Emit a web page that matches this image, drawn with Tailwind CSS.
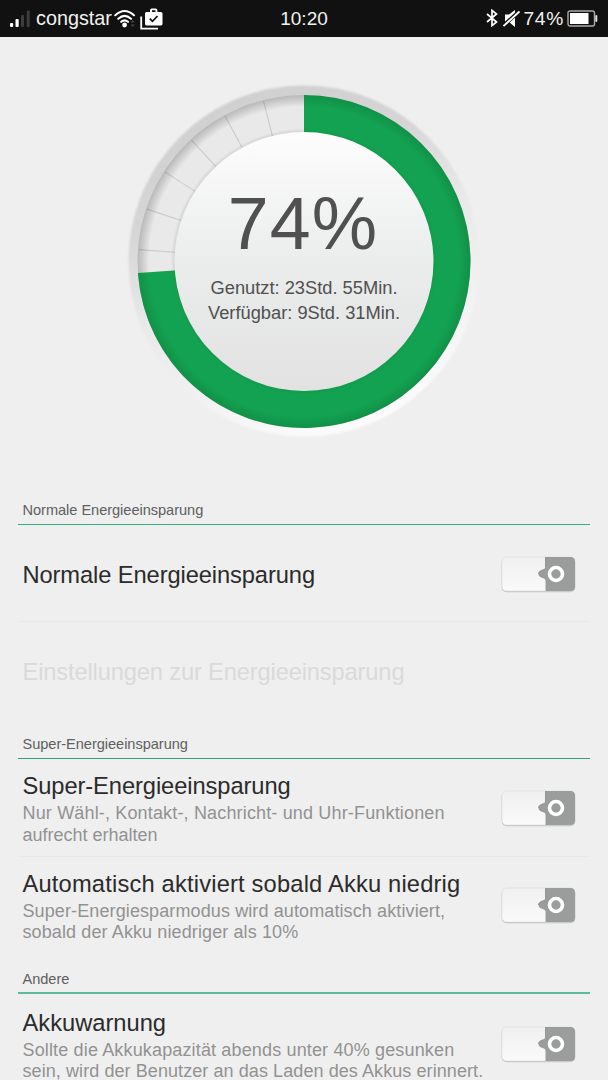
<!DOCTYPE html>
<html lang="de">

<head>
    <meta charset="UTF-8">
    <meta name="viewport" content="width=device-width, initial-scale=1.0">
    <title>Energieeinsparung</title>
    <script src="https://cdn.jsdelivr.net/npm/@tailwindcss/browser@4"></script>
</head>

<body class="h-[1080px] overflow-hidden bg-[#efefef] font-['Liberation_Sans',sans-serif] text-[#2b2b2b]">
    <!-- Status bar -->
    <header class="grid h-[37px] grid-cols-[1fr_auto_1fr] items-center bg-[#111] text-[#f2f2f2]">
        <div class="flex items-center pl-[10px]">
            <svg class="h-[18px] w-5" viewBox="0 0 20 18">
                <rect x="0" y="13" width="3.2" height="4" rx="1" fill="#fff" />
                <rect x="5.5" y="9" width="3.2" height="8" rx="1" fill="#fff" />
                <rect x="11" y="5" width="3" height="12" rx="1" fill="#3d3d3d" />
                <rect x="16.7" y="0.5" width="3" height="16.5" rx="1" fill="#3d3d3d" />
            </svg>
            <span class="ml-[6px] text-[19.8px] leading-none">congstar</span>
            <svg class="ml-[2px] h-[20px] w-[22px]" viewBox="0 0 22 20" fill="none" stroke="#fff" stroke-width="2.1" stroke-linecap="round">
                <path d="M1.3 6.2Q10.5-2.2 20 6.2M4.3 9.7Q10.5 4 17 9.7M7.2 12.8Q10.5 10 14 12.8" />
                <circle cx="10.6" cy="16" r="2.4" fill="#fff" stroke="none" />
                <path d="M16.5 13.5l2.2-2.6 2.2 2.6zM16.5 15.5l2.2 2.6 2.2-2.6z" fill="#444" stroke="none" />
            </svg>
            <svg class="ml-[4px] h-[22px] w-[24px]" viewBox="0 0 24 22">
                <path d="M1.2 8.5V20.6H18" fill="none" stroke="#fff" stroke-width="1.8" />
                <path d="M6.5 4H10V2.2Q10 .4 11.8 .4H15.6Q17.4 .4 17.4 2.2V4H21Q22.5 4 22.5 5.5V16Q22.5 17.4 21 17.4H6.5Q5 17.4 5 16V5.5Q5 4 6.5 4ZM12 4H15.5V2.2H12Z" fill="#fff" fill-rule="evenodd" />
                <path d="M9.8 10.6L12.5 13.3L17.5 8" fill="none" stroke="#111" stroke-width="1.8" />
            </svg>
        </div>
        <span class="text-[19px] leading-none">10:20</span>
        <div class="flex items-center justify-end pr-[10px]">
            <svg class="h-[18px] w-[12px]" viewBox="0 0 12 18" fill="none" stroke="#fff" stroke-width="1.7">
                <path d="M1 5L10.5 13L6 16.6V1.4L10.5 5L1 13" />
            </svg>
            <svg class="ml-[5px] h-[19px] w-[18px]" viewBox="0 0 18 19">
                <path d="M2 5.5H6L12 1V18L6 13H2Z" fill="#fff" />
                <path d="M0 17L16.5 2" stroke="#111" stroke-width="3.8" />
                <path d="M0.5 17L16.5 2.5" stroke="#fff" stroke-width="1.9" />
            </svg>
            <span class="ml-[2px] text-[19.2px] leading-none tracking-[0.7px]">74%</span>
            <svg class="ml-[3px] h-[17px] w-[31px]" viewBox="0 0 31 17">
                <rect x="1" y="1" width="26.5" height="15" rx="2" fill="none" stroke="#aaa" stroke-width="1.4" />
                <rect x="3" y="3" width="18.5" height="11" fill="#fff" />
                <rect x="28.3" y="5" width="2" height="7" rx="1" fill="#ddd" />
            </svg>
        </div>
    </header>

    <!-- Charge dial -->
    <section class="grid h-[449px] justify-center pt-[44px]">
        <svg class="col-start-1 row-start-1 size-[360px]" viewBox="124 81 360 360">
            <defs>
                <linearGradient id="rim" x1=".3" y1="0" x2=".7" y2="1">
                    <stop offset="0" stop-color="#cfcfcf" />
                    <stop offset=".25" stop-color="#d5d5d5" />
                    <stop offset=".5" stop-color="#e9e9e9" />
                    <stop offset=".75" stop-color="#f2f2f2" />
                    <stop offset="1" stop-color="#fdfdfd" />
                </linearGradient>
                <linearGradient id="face" x1="0" y1="0" x2="0" y2="1">
                    <stop offset="0" stop-color="#fdfdfd" />
                    <stop offset=".5" stop-color="#ebecec" />
                    <stop offset="1" stop-color="#e2e2e2" />
                </linearGradient>
                <radialGradient id="shade" gradientUnits="userSpaceOnUse" cx="304" cy="261.5" r="166.5">
                    <stop offset=".77" stop-color="#000" stop-opacity=".06" />
                    <stop offset=".8" stop-color="#000" stop-opacity="0" />
                    <stop offset=".93" stop-color="#000" stop-opacity="0" />
                    <stop offset="1" stop-color="#000" stop-opacity=".11" />
                </radialGradient>
                <filter id="soft" x="-5%" y="-5%" width="110%" height="110%">
                    <feGaussianBlur stdDeviation=".8" />
                </filter>
            </defs>
            <circle cx="304" cy="261" r="175.5" fill="url(#rim)" filter="url(#soft)" />
            <circle cx="304" cy="261.5" r="166.5" fill="#e9e9e9" />
            <g id="ticks" stroke="#cbcbcb" stroke-width="1.1"></g>
            <circle cx="304" cy="261.5" r="166.5" fill="url(#shade)" />
            <path d="M304 261.5V95A166.5 166.5 0 1 1 137.9 273Z" fill="#13a251" />
            <circle cx="304" cy="261.5" r="166.5" fill="url(#shade)" />
            <circle cx="304" cy="261.5" r="129.5" fill="url(#face)" />
        </svg>
        <div class="col-start-1 row-start-1 flex flex-col items-center pt-[101px] text-[#505050]">
            <div class="h-[94px] pr-[2px] text-[73.5px] leading-[84px] tracking-[1.2px]">74%</div>
            <div class="text-center text-[18.3px] leading-[24.5px]">Genutzt: 23Std. 55Min.<br>Verfügbar: 9Std. 31Min.</div>
        </div>
    </section>

    <main class="px-[18px]">
        <h2 class="flex h-[39px] items-end border-b border-[#35ab7e] pb-[5px] pl-[4.5px] text-[14.6px] leading-[18px] tracking-[-0.04px] text-[#606060]">Normale Energieeinsparung</h2>
        <div class="flex h-[97px] items-center justify-between border-b border-[#e8e8e8] pr-[12px] pl-[4.5px]">
            <span class="pt-[3px] text-[23.7px] leading-7 tracking-[-0.1px]">Normale Energieeinsparung</span>
            <div class="switch pt-[3px]"></div>
        </div>
        <div class="flex h-[97px] items-center pt-[2px] pl-[4.5px] text-[23.7px] leading-7 tracking-[-0.15px] text-[#dadada]">Einstellungen zur Energieeinsparung</div>

        <h2 class="flex h-[40px] items-end border-b border-[#35a27d] pb-[5px] pl-[4.5px] text-[14.6px] leading-[18px] tracking-[-0.04px] text-[#606060]">Super-Energieeinsparung</h2>
        <div class="flex h-[98px] items-center justify-between border-b border-[#e8e8e8] pr-[12px] pl-[4.5px]">
            <div class="pt-[2px]">
                <div class="pb-[2px] text-[23.7px] leading-[30px] tracking-[-0.08px]">Super-Energieeinsparung</div>
                <p class="whitespace-nowrap text-[18px] leading-[21.5px] text-[#929292]"><span class="tracking-[0.16px]">Nur Wähl-, Kontakt-, Nachricht- und Uhr-Funktionen</span><br>aufrecht erhalten</p>
            </div>
            <div class="switch pt-[2px]"></div>
        </div>
        <div class="flex h-[97px] items-center justify-between pr-[12px] pl-[4.5px]">
            <div class="pt-[1px]">
                <div class="pb-[2px] text-[23.7px] leading-[30px] tracking-[0.18px]">Automatisch aktiviert sobald Akku niedrig</div>
                <p class="whitespace-nowrap text-[18px] leading-[21.5px] tracking-[0.11px] text-[#929292]">Super-Energiesparmodus wird automatisch aktiviert,<br>sobald der Akku niedriger als 10%</p>
            </div>
            <div class="switch"></div>
        </div>

        <h2 class="flex h-[40px] items-end border-b-2 border-[#5bbd98] pb-[4px] pl-[4.5px] text-[14.6px] leading-[18px] tracking-[-0.04px] text-[#606060]">Andere</h2>
        <div class="flex h-[98px] items-center justify-between pr-[12px] pl-[4.5px]">
            <div class="pt-[4px]">
                <div class="pb-[2px] text-[23.7px] leading-[30px]">Akkuwarnung</div>
                <p class="whitespace-nowrap text-[18px] leading-[21.5px] text-[#929292]"><span class="tracking-[0.15px]">Sollte die Akkukapazität abends unter 40% gesunken</span><br><span class="tracking-[0.08px]">sein, wird der Benutzer an das Laden des Akkus erinnert.</span></p>
            </div>
            <div class="switch pt-[3px]"></div>
        </div>
    </main>

    <template id="switch">
        <svg class="h-[40px] w-[78px]" viewBox="0 0 78 40">
            <defs>
                <linearGradient id="plate" x1="0" y1="0" x2="0" y2="1">
                    <stop offset="0" stop-color="#f0f0f0" />
                    <stop offset="1" stop-color="#fafafa" />
                </linearGradient>
            </defs>
            <rect x="1.7" y="2.8" width="73.6" height="34.4" rx="5" fill="#b4b4b4" opacity=".8" />
            <rect x="2" y="2" width="73" height="34" rx="4.5" fill="url(#plate)" stroke="#dedede" stroke-width=".7" />
            <path d="M45.5 2H70.5Q75 2 75 6.5V31.5Q75 36 70.5 36H45.5V25.5C45.5 22.5 38.5 23.5 38.5 19S45.5 15.5 45.5 12.5Z" fill="#9b9d9c" />
            <path d="M45.5 2V12.5C45.5 15.5 38.5 14.5 38.5 19" fill="none" stroke="#868887" stroke-width=".8" />
            <circle cx="56" cy="19" r="6.5" fill="none" stroke="#fff" stroke-width="3.6" />
        </svg>
    </template>
    <script>
        // 25 segments around the dial, only the free ones stay visible
        let lines = '';
        for (let i = 1; i <= 6; i++) {
            lines += '<path d="M304 96V132" transform="rotate(' + (-14.35 * i + 0.2) + ' 304 261.5)"/>';
        }
        document.getElementById('ticks').innerHTML = lines;

        document.querySelectorAll('.switch').forEach(el => {
            el.appendChild(document.getElementById('switch').content.cloneNode(true));
        });
    </script>
</body>

</html>
